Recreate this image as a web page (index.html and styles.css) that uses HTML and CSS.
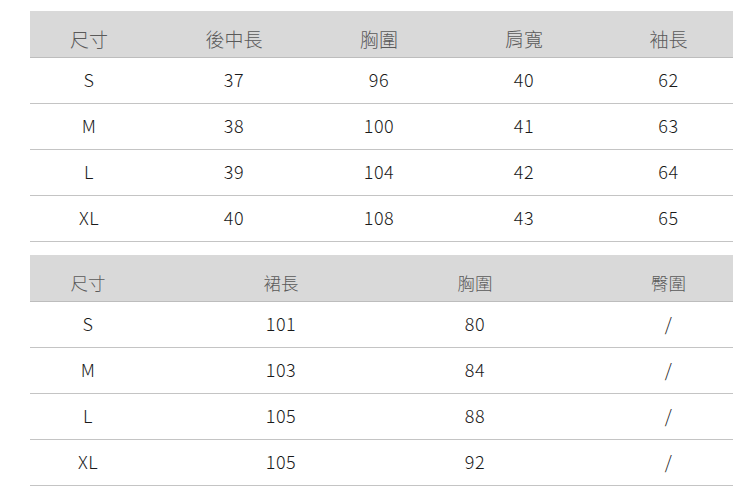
FILE: index.html
```html
<!DOCTYPE html>
<html lang="zh-Hant">
<head>
<meta charset="utf-8">
<title>尺寸表</title>
<link rel="stylesheet" href="styles.css">
</head>
<body>
<div class="page">
  <div class="size-table t5">
    <div class="cell head">尺寸</div>
    <div class="cell head">後中長</div>
    <div class="cell head">胸圍</div>
    <div class="cell head">肩寬</div>
    <div class="cell head last">袖長</div>

    <div class="cell">S</div><div class="cell">37</div><div class="cell">96</div><div class="cell">40</div><div class="cell last">62</div>
    <div class="cell">M</div><div class="cell">38</div><div class="cell">100</div><div class="cell">41</div><div class="cell last">63</div>
    <div class="cell">L</div><div class="cell">39</div><div class="cell">104</div><div class="cell">42</div><div class="cell last">64</div>
    <div class="cell">XL</div><div class="cell">40</div><div class="cell">108</div><div class="cell">43</div><div class="cell last">65</div>
  </div>

  <div class="size-table t4">
    <div class="cell head small">尺寸</div>
    <div class="cell head small">裙長</div>
    <div class="cell head small">胸圍</div>
    <div class="cell head small last">臀圍</div>

    <div class="cell">S</div><div class="cell">101</div><div class="cell">80</div><div class="cell last">/</div>
    <div class="cell">M</div><div class="cell">103</div><div class="cell">84</div><div class="cell last">/</div>
    <div class="cell">L</div><div class="cell">105</div><div class="cell">88</div><div class="cell last">/</div>
    <div class="cell">XL</div><div class="cell">105</div><div class="cell">92</div><div class="cell last">/</div>
  </div>
</div>
</body>
</html>
```

FILE: styles.css
```css
html, body {
  margin: 0;
  padding: 0;
  background: #ffffff;
}

body {
  font-family: "Noto Sans CJK TC", "Noto Sans", sans-serif;
  font-weight: 300;
  color: #1a1a1a;
}

.page {
  padding: 11px 17px 0 30px;
  display: flex;
  flex-direction: column;
  gap: 13px;
  width: 703px;
}

.size-table {
  display: grid;
  width: 703px;
}

.t5 {
  grid-template-columns: 118px 172px 118px 172px 123px;
}

.t5 .last {
  padding-right: 6px;
}

.t4 {
  grid-template-columns: 116px 270px 118px 199px;
}

.t4 .last {
  padding-left: 70px;
}

.cell {
  border-bottom: 1px solid #c4c4c4;
  display: flex;
  align-items: center;
  justify-content: center;
  font-size: 18px;
  letter-spacing: 0.5px;
  padding-bottom: 4px;
  box-sizing: content-box;
  height: 41px;
}

.cell.head {
  background: #d9d9d9;
  color: #5a5a5a;
  font-size: 19px;
  letter-spacing: 0;
  height: 38px;
  padding-top: 8px;
  padding-bottom: 0;
  border-bottom-color: #bdbdbd;
}

.cell.head.small {
  font-size: 17.5px;
}
```
